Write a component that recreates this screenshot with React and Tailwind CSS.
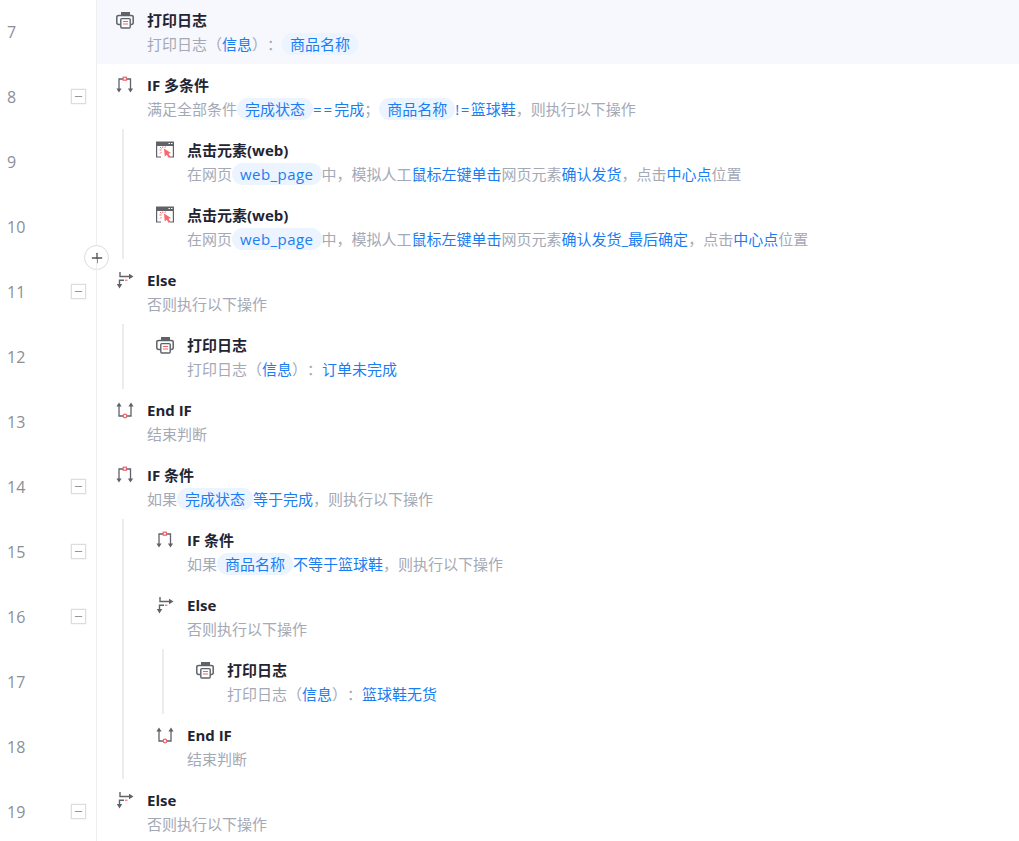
import { Plus, Minus } from "lucide-react";

const PrintIcon = () => (
  <svg width="18" height="18" viewBox="0 0 18 18" fill="none" className="flex-none">
    <rect x="5" y="1" width="9" height="3" fill="#5f6368" />
    <path d="M4.5 13.5 H2.8 Q0.8 13.5 0.8 11.5 V6 Q0.8 4.4 2.8 4.4 H15.2 Q17.2 4.4 17.2 6 V11.5 Q17.2 13.5 15.2 13.5 H14.5" stroke="#5f6368" strokeWidth="1.5" />
    <rect x="4.8" y="7.6" width="9.4" height="9.4" rx="1" fill="#fff" stroke="#5f6368" strokeWidth="1.4" />
    <path d="M7 10.5 H12 M7 13 H12" stroke="#f0626a" strokeWidth="1.2" />
  </svg>
);

const IfIcon = () => (
  <svg width="18" height="18" viewBox="0 0 18 18" fill="none" className="flex-none">
    <path d="M3 14 V3 H7 M10.5 3 H14.5 V14" stroke="#5f6368" strokeWidth="1.3" />
    <rect x="7.2" y="1.2" width="3.2" height="3" stroke="#f0626a" strokeWidth="1.2" />
    <path d="M0.4 12.5 H5.6 L3 16.5 Z M11.9 12.5 H17.1 L14.5 16.5 Z" fill="#5f6368" />
  </svg>
);

const EndIfIcon = () => (
  <svg width="18" height="18" viewBox="0 0 18 18" fill="none" className="flex-none">
    <path d="M3 5 V15 H7 M11 15 H15 V5" stroke="#5f6368" strokeWidth="1.3" />
    <circle cx="9" cy="15" r="1.8" stroke="#f0626a" strokeWidth="1.3" />
    <path d="M0.4 5.5 H5.6 L3 1.5 Z M12.4 5.5 H17.6 L15 1.5 Z" fill="#5f6368" />
  </svg>
);

const ElseIcon = () => (
  <svg width="18" height="18" viewBox="0 0 18 18" fill="none" className="flex-none">
    <path d="M4 1 V5.5 H14" stroke="#5f6368" strokeWidth="1.4" />
    <path d="M13 2.8 L17.5 5.5 L13 8.2 Z" fill="#5f6368" />
    <path d="M3.5 14 V9.2 H8" stroke="#5f6368" strokeWidth="1.4" />
    <path d="M9 9.2 H11.5" stroke="#f0626a" strokeWidth="1.1" />
    <path d="M0.8 13 H6.2 L3.5 17.5 Z" fill="#5f6368" />
  </svg>
);

const ClickIcon = () => (
  <svg width="18" height="18" viewBox="0 0 18 18" fill="none" className="flex-none">
    <rect x="0" y="0.5" width="18" height="4.5" fill="#5f6368" />
    <path d="M12.5 2.5 H14 M15 2.5 H16.5" stroke="#fff" strokeWidth="1" />
    <path d="M0.6 5 V16 H5 M13.5 16 H17.4 V5" stroke="#5f6368" strokeWidth="1.2" />
    <path d="M8 7.5 L15 12 L12.5 12.8 L14.5 15.7 L12.5 16.8 L10.8 13.7 L8.8 15.4 Z" fill="#f9686f" />
    <path d="M6.8 5.5 V7 M3.5 9 H5.5 M4 6 L5.5 7.5 M4 12.5 L5.5 11 M9.5 5.5 L8.8 6.8" stroke="#f9686f" strokeWidth="1" />
  </svg>
);

const icons = { print: PrintIcon, if: IfIcon, endif: EndIfIcon, else: ElseIcon, click: ClickIcon };

const Pill = ({ children }) => (
  <span className="inline-block h-[22px] rounded-full bg-[#ebf4ff] px-2 leading-[22px] text-[#1a7ef2]">{children}</span>
);

const Blue = ({ children }) => <span className="text-[#1a7ef2]">{children}</span>;

const clickDesc = (target) => (
  <>
    在网页<Pill><span className="tracking-[0.45px]">web_page</span></Pill>中，模拟人工<Blue>鼠标左键单击</Blue>网页元素<Blue>{target}</Blue>，点击<Blue>中心点</Blue>位置
  </>
);

const rows = [
  { n: 7, level: 0, icon: "print", title: "打印日志", active: true, desc: <>打印日志（<Blue>信息</Blue>）：<Pill>商品名称</Pill></> },
  {
    n: 8, level: 0, icon: "if", title: "IF 多条件", fold: true,
    desc: <>满足全部条件<Pill>完成状态</Pill><Blue><span className="tracking-[2px]">==</span>完成</Blue>；<Pill>商品名称</Pill><Blue><span className="tracking-[1.5px]">!=</span>篮球鞋</Blue>，则执行以下操作</>,
  },
  { n: 9, level: 1, icon: "click", title: "点击元素(web)", desc: clickDesc("确认发货") },
  { n: 10, level: 1, icon: "click", title: "点击元素(web)", add: true, desc: clickDesc("确认发货_最后确定") },
  { n: 11, level: 0, icon: "else", title: "Else", fold: true, desc: "否则执行以下操作" },
  { n: 12, level: 1, icon: "print", title: "打印日志", desc: <>打印日志（<Blue>信息</Blue>）：<Blue>订单未完成</Blue></> },
  { n: 13, level: 0, icon: "endif", title: "End IF", desc: "结束判断" },
  { n: 14, level: 0, icon: "if", title: "IF 条件", fold: true, desc: <>如果<Pill>完成状态</Pill><Blue>等于完成</Blue>，则执行以下操作</> },
  { n: 15, level: 1, icon: "if", title: "IF 条件", fold: true, desc: <>如果<Pill>商品名称</Pill><Blue>不等于篮球鞋</Blue>，则执行以下操作</> },
  { n: 16, level: 1, icon: "else", title: "Else", fold: true, desc: "否则执行以下操作" },
  { n: 17, level: 2, icon: "print", title: "打印日志", desc: <>打印日志（<Blue>信息</Blue>）：<Blue>篮球鞋无货</Blue></> },
  { n: 18, level: 1, icon: "endif", title: "End IF", desc: "结束判断" },
  { n: 19, level: 0, icon: "else", title: "Else", fold: true, desc: "否则执行以下操作" },
];

const Row = ({ row }) => {
  const Icon = icons[row.icon];
  return (
    <div className="relative flex h-[65px] flex-none">
      <div className="flex w-[96px] flex-none items-center pl-[7px]">
        <span className="w-16 pt-px text-[16px] text-[#8b8f97]">{row.n}</span>
        {row.fold && (
          <span className="flex h-[15px] w-[15px] items-center justify-center border border-[#dddddd] bg-white shadow-[0_0_1px_#ccc]">
            <Minus size={11} color="#666" strokeWidth={1.5} />
          </span>
        )}
      </div>
      <div className={`flex min-w-0 flex-1 border-l border-[#eeeeee] pl-[19px] ${row.active ? "bg-[#f7f8fd]" : ""}`}>
        {Array.from({ length: row.level }).map((_, i) => (
          <div key={i} className="w-10 flex-none">
            <div className="ml-1.5 h-full w-0.5 bg-[#ececec]"></div>
          </div>
        ))}
        <div className="flex-1 whitespace-nowrap pt-[9px]">
          <div className="flex h-6 items-center">
            <div className="w-[31px] flex-none">
              <Icon />
            </div>
            <span className="text-[15px] font-bold leading-6 text-[#1f2533]">{row.title}</span>
          </div>
          <div className="ml-[31px] h-6 text-[15px] leading-6 text-[#a4a9b6] [text-spacing-trim:space-all]">{row.desc}</div>
        </div>
      </div>
      {row.add && (
        <span className="absolute left-[84px] top-[51px] flex h-[25px] w-[25px] items-center justify-center rounded-full border border-[#dddddd] bg-white">
          <Plus size={16} color="#555" strokeWidth={2} />
        </span>
      )}
    </div>
  );
};

export default function App() {
  return (
    <div className="h-[841px] w-[1019px] overflow-hidden bg-white font-['Open_Sans','Noto_Sans_CJK_SC',sans-serif]">
      <div className="-mt-px flex flex-col">
        {rows.map((row) => (
          <Row key={row.n} row={row} />
        ))}
      </div>
    </div>
  );
}
